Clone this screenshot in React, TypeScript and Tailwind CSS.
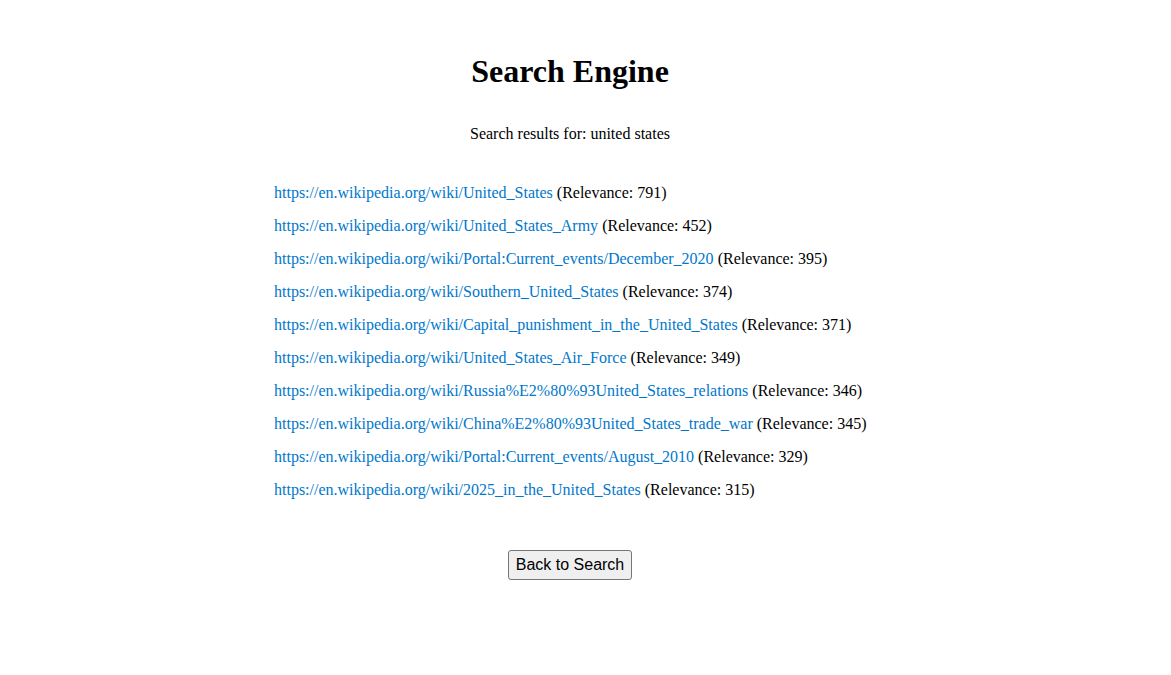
const RESULTS = [
  { url: 'https://en.wikipedia.org/wiki/United_States', score: 791 },
  { url: 'https://en.wikipedia.org/wiki/United_States_Army', score: 452 },
  { url: 'https://en.wikipedia.org/wiki/Portal:Current_events/December_2020', score: 395 },
  { url: 'https://en.wikipedia.org/wiki/Southern_United_States', score: 374 },
  { url: 'https://en.wikipedia.org/wiki/Capital_punishment_in_the_United_States', score: 371 },
  { url: 'https://en.wikipedia.org/wiki/United_States_Air_Force', score: 349 },
  { url: 'https://en.wikipedia.org/wiki/Russia%E2%80%93United_States_relations', score: 346 },
  { url: 'https://en.wikipedia.org/wiki/China%E2%80%93United_States_trade_war', score: 345 },
  { url: 'https://en.wikipedia.org/wiki/Portal:Current_events/August_2010', score: 329 },
  { url: 'https://en.wikipedia.org/wiki/2025_in_the_United_States', score: 315 },
]

export default function App() {
  return (
    <div className="min-h-screen bg-white text-black font-['Liberation_Serif','Times_New_Roman',serif]">
      <div className="w-[1140px] pt-[53px]">
        <h1 className="text-center text-[32px] leading-[37px] font-bold">Search Engine</h1>
        <p className="text-center text-[16px] leading-[18px] mt-[35px]">Search results for: united states</p>

        {/* results */}
        <ul className="w-[592px] ml-[274px] mt-[41px] flex flex-col gap-[15px] text-[16px] leading-[18px]">
          {RESULTS.map(r => (
            <li key={r.url} className="h-[18px] whitespace-nowrap">
              <a href={r.url} className="text-[#0077cc] no-underline">{r.url}</a> (Relevance: {r.score})
            </li>
          ))}
        </ul>

        <div className="flex justify-center mt-[51px]">
          <button className="h-[30px] px-[7px] border border-[#767676] rounded-[3px] bg-[#efefef] text-[16px] font-['Liberation_Sans',Arial,sans-serif] text-black">
            Back to Search
          </button>
        </div>
      </div>
    </div>
  )
}
